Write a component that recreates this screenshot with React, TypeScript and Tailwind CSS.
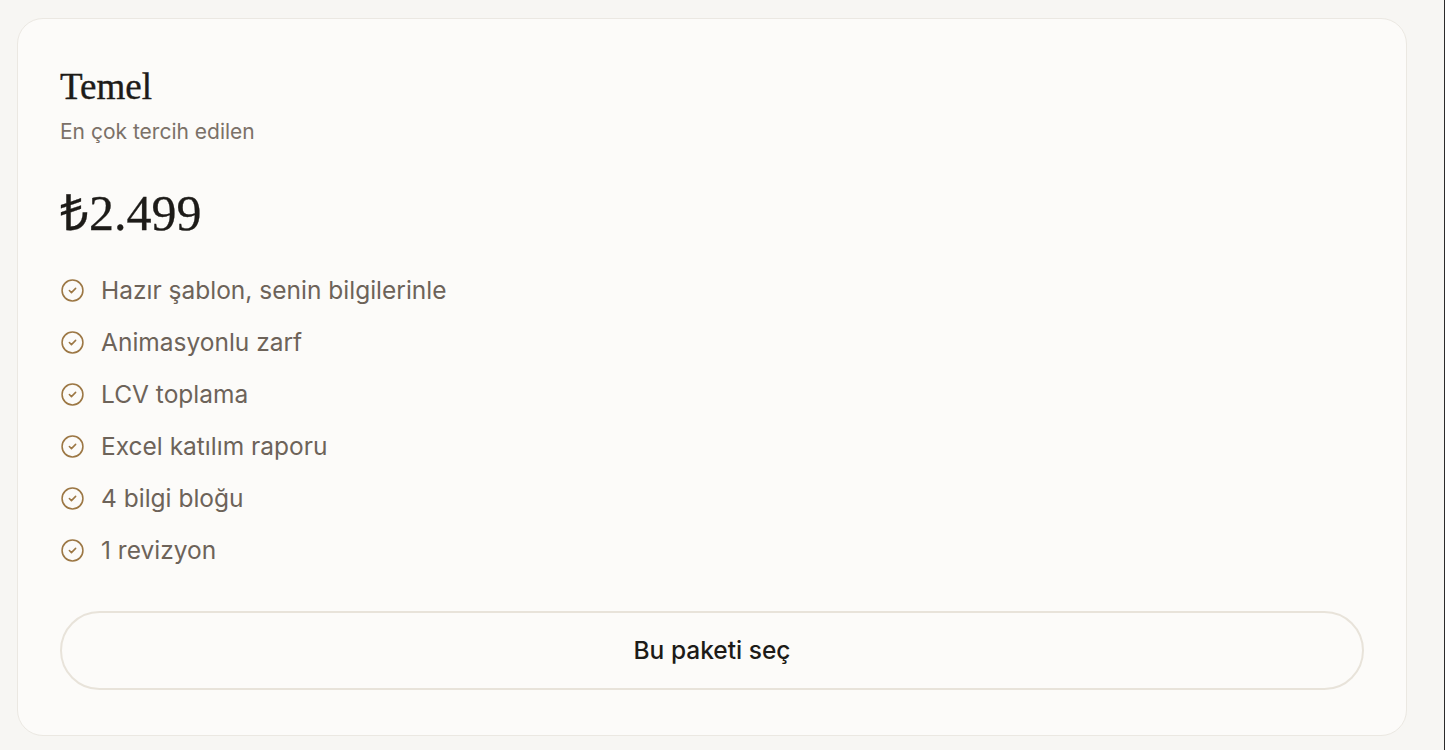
import { CircleCheck } from 'lucide-react';

const features = [
    'Hazır şablon, senin bilgilerinle',
    'Animasyonlu zarf',
    'LCV toplama',
    'Excel katılım raporu',
    '4 bilgi bloğu',
    '1 revizyon',
];

const App = () => {
    return (
        <main className="w-full min-h-[750px] bg-[#f7f6f3] border-r border-[#2b2b2b] pt-[18px] pl-[17px] pr-[37px] font-['Inter',sans-serif]">
            <section className="w-[1390px] rounded-[26px] border border-[#ebe8e2] bg-[#fcfbf9] px-[42px] pt-[48px] pb-[45px]">
                <h2 className="font-['Liberation_Serif',serif] text-[37px] leading-[40px] text-[#1d1b18] [-webkit-text-stroke:0.4px_#1d1b18]">
                    Temel
                </h2>
                <p className="mt-[11px] text-[21px] leading-[28px] text-[#7b7168]">En çok tercih edilen</p>

                <div className="mt-[42px] font-['Liberation_Serif',serif] text-[50px] leading-[50px] text-[#1d1b18] [-webkit-text-stroke:0.3px_#1d1b18]">
                    ₺2.499
                </div>

                <ul className="mt-[34px] flex flex-col gap-4">
                    {features.map((item) => (
                        <li key={item} className="flex items-center gap-[16px] text-[24.5px] leading-[36px] text-[#6d6359]">
                            <CircleCheck size={25} strokeWidth={1.5} className="shrink-0 text-[#9c7744]" />
                            <span>{item}</span>
                        </li>
                    ))}
                </ul>

                <button
                    type="button"
                    className="mt-[43px] w-full h-[79px] rounded-full border-2 border-[#e8e3da] bg-[#fcfbf9] text-[24.5px] font-medium text-[#1d1b18]"
                >
                    Bu paketi seç
                </button>
            </section>
        </main>
    );
};

export default App;
